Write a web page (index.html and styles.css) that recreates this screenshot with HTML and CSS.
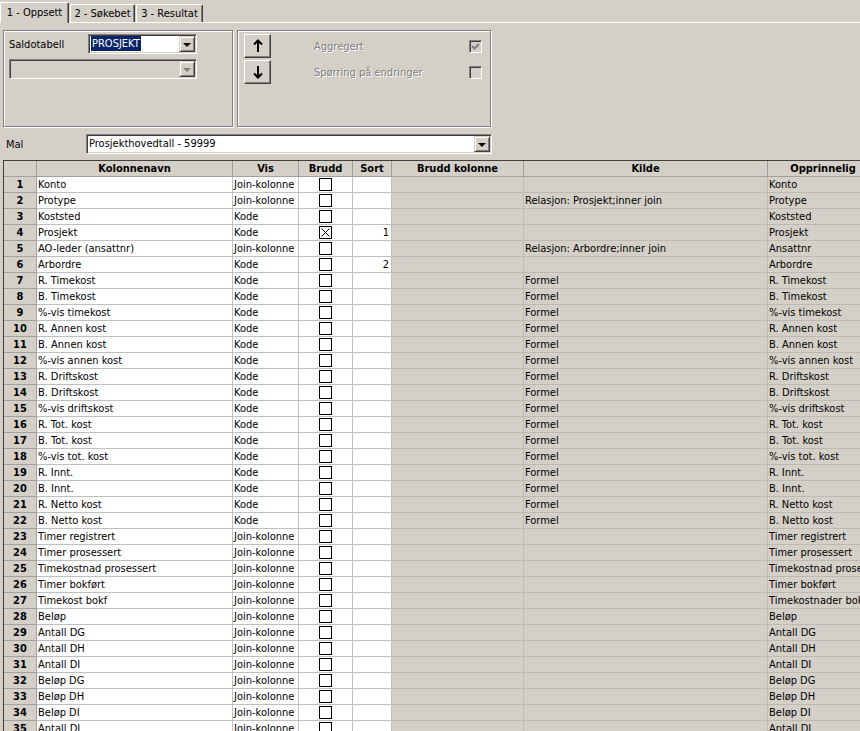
FILE: index.html
```html
<!DOCTYPE html>
<html lang="no">
<head>
<meta charset="utf-8">
<title>Oppsett</title>
<link rel="stylesheet" href="styles.css">
</head>
<body>
<div class="tabs">
  <div class="tab active t1">1 - Oppsett</div>
  <div class="tab t2">2 - Søkebet</div>
  <div class="tab t3">3 - Resultat</div>
</div>

<div class="top">
  <div class="panel p1">
    <div class="prow">
      <span class="lbl lbl-sal">Saldotabell</span>
      <div class="combo c-sal">
        <span class="ctext"><span class="sel">PROSJEKT</span></span>
        <span class="dbtn"><span class="tri"></span></span>
      </div>
    </div>
    <div class="combo c-dis disabled">
      <span class="ctext"></span>
      <span class="dbtn"><span class="tri"></span></span>
    </div>
  </div>
  <div class="panel p2">
    <div class="arrows">
      <div class="abtn">
        <svg width="10" height="14" viewBox="0 0 10 14"><path d="M5 13V1.5M1 5.5L5 1.5L9 5.5" fill="none" stroke="#000" stroke-width="2"/></svg>
      </div>
      <div class="abtn">
        <svg width="10" height="14" viewBox="0 0 10 14"><path d="M5 1V12.5M1 8.5L5 12.5L9 8.5" fill="none" stroke="#000" stroke-width="2"/></svg>
      </div>
    </div>
    <div class="opts">
      <div class="opt">
        <span class="dlbl">Aggregert</span>
        <span class="ck">
          <svg width="9" height="9" viewBox="0 0 9 9"><path d="M1 4L3.5 6.5L8 2" fill="none" stroke="#808080" stroke-width="2"/></svg>
        </span>
      </div>
      <div class="opt">
        <span class="dlbl">Spørring på endringer</span>
        <span class="ck"></span>
      </div>
    </div>
  </div>
</div>

<div class="malrow">
  <span class="lbl lbl-mal">Mal</span>
  <div class="combo c-mal">
    <span class="ctext">Prosjekthovedtall - 59999</span>
    <span class="dbtn"><span class="tri"></span></span>
  </div>
</div>

<div class="grid">
<table>
<thead>
<tr>
  <th class="w0"></th>
  <th class="w1">Kolonnenavn</th>
  <th class="w2">Vis</th>
  <th class="w3">Brudd</th>
  <th class="w4">Sort</th>
  <th class="w5">Brudd kolonne</th>
  <th class="w6">Kilde</th>
  <th class="w7">Opprinnelig</th>
</tr>
</thead>
<tbody>
<tr><th class="rh">1</th><td>Konto</td><td>Join-kolonne</td><td class="chk"><span class="cb"></span></td><td class="num"></td><td class="g"></td><td class="g"></td><td class="g">Konto</td></tr>
<tr><th class="rh">2</th><td>Protype</td><td>Join-kolonne</td><td class="chk"><span class="cb"></span></td><td class="num"></td><td class="g"></td><td class="g">Relasjon: Prosjekt;inner join</td><td class="g">Protype</td></tr>
<tr><th class="rh">3</th><td>Koststed</td><td>Kode</td><td class="chk"><span class="cb"></span></td><td class="num"></td><td class="g"></td><td class="g"></td><td class="g">Koststed</td></tr>
<tr><th class="rh">4</th><td>Prosjekt</td><td>Kode</td><td class="chk"><span class="cb"><svg width="11" height="11" viewBox="0 0 11 11"><path d="M1.5 1.5L9.5 9.5M9.5 1.5L1.5 9.5" stroke="#000" stroke-width="1"/></svg></span></td><td class="num">1</td><td class="g"></td><td class="g"></td><td class="g">Prosjekt</td></tr>
<tr><th class="rh">5</th><td>AO-leder (ansattnr)</td><td>Join-kolonne</td><td class="chk"><span class="cb"></span></td><td class="num"></td><td class="g"></td><td class="g">Relasjon: Arbordre;inner join</td><td class="g">Ansattnr</td></tr>
<tr><th class="rh">6</th><td>Arbordre</td><td>Kode</td><td class="chk"><span class="cb"></span></td><td class="num">2</td><td class="g"></td><td class="g"></td><td class="g">Arbordre</td></tr>
<tr><th class="rh">7</th><td>R. Timekost</td><td>Kode</td><td class="chk"><span class="cb"></span></td><td class="num"></td><td class="g"></td><td class="g">Formel</td><td class="g">R. Timekost</td></tr>
<tr><th class="rh">8</th><td>B. Timekost</td><td>Kode</td><td class="chk"><span class="cb"></span></td><td class="num"></td><td class="g"></td><td class="g">Formel</td><td class="g">B. Timekost</td></tr>
<tr><th class="rh">9</th><td>%-vis timekost</td><td>Kode</td><td class="chk"><span class="cb"></span></td><td class="num"></td><td class="g"></td><td class="g">Formel</td><td class="g">%-vis timekost</td></tr>
<tr><th class="rh">10</th><td>R. Annen kost</td><td>Kode</td><td class="chk"><span class="cb"></span></td><td class="num"></td><td class="g"></td><td class="g">Formel</td><td class="g">R. Annen kost</td></tr>
<tr><th class="rh">11</th><td>B. Annen kost</td><td>Kode</td><td class="chk"><span class="cb"></span></td><td class="num"></td><td class="g"></td><td class="g">Formel</td><td class="g">B. Annen kost</td></tr>
<tr><th class="rh">12</th><td>%-vis annen kost</td><td>Kode</td><td class="chk"><span class="cb"></span></td><td class="num"></td><td class="g"></td><td class="g">Formel</td><td class="g">%-vis annen kost</td></tr>
<tr><th class="rh">13</th><td>R. Driftskost</td><td>Kode</td><td class="chk"><span class="cb"></span></td><td class="num"></td><td class="g"></td><td class="g">Formel</td><td class="g">R. Driftskost</td></tr>
<tr><th class="rh">14</th><td>B. Driftskost</td><td>Kode</td><td class="chk"><span class="cb"></span></td><td class="num"></td><td class="g"></td><td class="g">Formel</td><td class="g">B. Driftskost</td></tr>
<tr><th class="rh">15</th><td>%-vis driftskost</td><td>Kode</td><td class="chk"><span class="cb"></span></td><td class="num"></td><td class="g"></td><td class="g">Formel</td><td class="g">%-vis driftskost</td></tr>
<tr><th class="rh">16</th><td>R. Tot. kost</td><td>Kode</td><td class="chk"><span class="cb"></span></td><td class="num"></td><td class="g"></td><td class="g">Formel</td><td class="g">R. Tot. kost</td></tr>
<tr><th class="rh">17</th><td>B. Tot. kost</td><td>Kode</td><td class="chk"><span class="cb"></span></td><td class="num"></td><td class="g"></td><td class="g">Formel</td><td class="g">B. Tot. kost</td></tr>
<tr><th class="rh">18</th><td>%-vis tot. kost</td><td>Kode</td><td class="chk"><span class="cb"></span></td><td class="num"></td><td class="g"></td><td class="g">Formel</td><td class="g">%-vis tot. kost</td></tr>
<tr><th class="rh">19</th><td>R. Innt.</td><td>Kode</td><td class="chk"><span class="cb"></span></td><td class="num"></td><td class="g"></td><td class="g">Formel</td><td class="g">R. Innt.</td></tr>
<tr><th class="rh">20</th><td>B. Innt.</td><td>Kode</td><td class="chk"><span class="cb"></span></td><td class="num"></td><td class="g"></td><td class="g">Formel</td><td class="g">B. Innt.</td></tr>
<tr><th class="rh">21</th><td>R. Netto kost</td><td>Kode</td><td class="chk"><span class="cb"></span></td><td class="num"></td><td class="g"></td><td class="g">Formel</td><td class="g">R. Netto kost</td></tr>
<tr><th class="rh">22</th><td>B. Netto kost</td><td>Kode</td><td class="chk"><span class="cb"></span></td><td class="num"></td><td class="g"></td><td class="g">Formel</td><td class="g">B. Netto kost</td></tr>
<tr><th class="rh">23</th><td>Timer registrert</td><td>Join-kolonne</td><td class="chk"><span class="cb"></span></td><td class="num"></td><td class="g"></td><td class="g"></td><td class="g">Timer registrert</td></tr>
<tr><th class="rh">24</th><td>Timer prosessert</td><td>Join-kolonne</td><td class="chk"><span class="cb"></span></td><td class="num"></td><td class="g"></td><td class="g"></td><td class="g">Timer prosessert</td></tr>
<tr><th class="rh">25</th><td>Timekostnad prosessert</td><td>Join-kolonne</td><td class="chk"><span class="cb"></span></td><td class="num"></td><td class="g"></td><td class="g"></td><td class="g">Timekostnad prosessert</td></tr>
<tr><th class="rh">26</th><td>Timer bokført</td><td>Join-kolonne</td><td class="chk"><span class="cb"></span></td><td class="num"></td><td class="g"></td><td class="g"></td><td class="g">Timer bokført</td></tr>
<tr><th class="rh">27</th><td>Timekost bokf</td><td>Join-kolonne</td><td class="chk"><span class="cb"></span></td><td class="num"></td><td class="g"></td><td class="g"></td><td class="g">Timekostnader bokført</td></tr>
<tr><th class="rh">28</th><td>Beløp</td><td>Join-kolonne</td><td class="chk"><span class="cb"></span></td><td class="num"></td><td class="g"></td><td class="g"></td><td class="g">Beløp</td></tr>
<tr><th class="rh">29</th><td>Antall DG</td><td>Join-kolonne</td><td class="chk"><span class="cb"></span></td><td class="num"></td><td class="g"></td><td class="g"></td><td class="g">Antall DG</td></tr>
<tr><th class="rh">30</th><td>Antall DH</td><td>Join-kolonne</td><td class="chk"><span class="cb"></span></td><td class="num"></td><td class="g"></td><td class="g"></td><td class="g">Antall DH</td></tr>
<tr><th class="rh">31</th><td>Antall DI</td><td>Join-kolonne</td><td class="chk"><span class="cb"></span></td><td class="num"></td><td class="g"></td><td class="g"></td><td class="g">Antall DI</td></tr>
<tr><th class="rh">32</th><td>Beløp DG</td><td>Join-kolonne</td><td class="chk"><span class="cb"></span></td><td class="num"></td><td class="g"></td><td class="g"></td><td class="g">Beløp DG</td></tr>
<tr><th class="rh">33</th><td>Beløp DH</td><td>Join-kolonne</td><td class="chk"><span class="cb"></span></td><td class="num"></td><td class="g"></td><td class="g"></td><td class="g">Beløp DH</td></tr>
<tr><th class="rh">34</th><td>Beløp DI</td><td>Join-kolonne</td><td class="chk"><span class="cb"></span></td><td class="num"></td><td class="g"></td><td class="g"></td><td class="g">Beløp DI</td></tr>
<tr><th class="rh">35</th><td>Antall DJ</td><td>Join-kolonne</td><td class="chk"><span class="cb"></span></td><td class="num"></td><td class="g"></td><td class="g"></td><td class="g">Antall DJ</td></tr>
</tbody>
</table>
</div>
</body>
</html>
```

FILE: styles.css
```css
html, body {
  margin: 0;
  padding: 0;
  width: 860px;
  height: 731px;
  overflow: hidden;
  background: #d4d0c8;
}
body {
  font-family: "DejaVu Sans Condensed", "Liberation Sans", sans-serif;
  font-size: 11px;
  color: #000;
}

/* Tabs */
.tabs {
  display: flex;
  align-items: flex-end;
  height: 22px;
  border-bottom: 1px solid #fff;
}
.tab {
  box-sizing: border-box;
  height: 18px;
  line-height: 18px;
  text-align: center;
  border-top: 1px solid #fff;
  border-left: 1px solid #fff;
  border-right: 1px solid #404040;
  box-shadow: inset -1px 0 0 #808080;
  border-radius: 2px 2px 0 0;
  background: #d4d0c8;
  margin-left: 1px;
}
.tab.active {
  height: 21px;
  line-height: 19px;
  margin-bottom: -1px;
  position: relative;
  z-index: 1;
  margin-left: 0;
}
.t1 { width: 69px; }
.t2 { width: 65px; }
.t3 { width: 67px; margin-left: 1px; }

/* Top panels */
.top {
  display: flex;
  gap: 4px;
  margin: 7px 0 0 3px;
}
.panel {
  box-sizing: border-box;
  height: 97px;
  border: 1px solid #808080;
  box-shadow: inset 1px 1px 0 #fff, 1px 1px 0 #fff;
}
.p1 {
  width: 230px;
  padding: 3px 0 0 5px;
}
.p2 {
  width: 254px;
  padding: 3px 0 0 6px;
  display: flex;
}
.prow {
  display: flex;
  align-items: center;
}
.lbl-sal { width: 79px; }

/* Combos */
.combo {
  box-sizing: border-box;
  height: 20px;
  display: flex;
  background: #fff;
  border: 1px solid;
  border-color: #808080 #fff #fff #808080;
  box-shadow: inset 1px 1px 0 #404040, inset -1px -1px 0 #d4d0c8;
  padding: 1px;
}
.combo.disabled { background: #d4d0c8; }
.c-sal { width: 109px; }
.c-dis { width: 188px; margin-top: 5px; }
.c-mal { width: 406px; }
.ctext {
  flex: 1;
  line-height: 16px;
  padding-left: 1px;
  white-space: nowrap;
  overflow: hidden;
}
.sel {
  background: #0a246a;
  color: #fff;
  padding: 1px 1px;
}
.dbtn {
  box-sizing: border-box;
  width: 16px;
  height: 16px;
  background: #d4d0c8;
  border: 1px solid;
  border-color: #d4d0c8 #404040 #404040 #d4d0c8;
  box-shadow: inset 1px 1px 0 #fff, inset -1px -1px 0 #808080;
  display: flex;
  align-items: center;
  justify-content: center;
}
.tri {
  width: 0;
  height: 0;
  border-left: 4px solid transparent;
  border-right: 4px solid transparent;
  border-top: 4px solid #000;
  margin-top: 1px;
}
.disabled .tri { border-top-color: #808080; }

/* Arrow buttons */
.arrows {
  display: flex;
  flex-direction: column;
  gap: 2px;
}
.abtn {
  box-sizing: border-box;
  width: 27px;
  height: 24px;
  border: 1px solid;
  border-color: #fff #404040 #404040 #fff;
  box-shadow: inset -1px -1px 0 #808080;
  display: flex;
  align-items: center;
  justify-content: center;
}
.opts {
  margin: 6px 0 0 43px;
  width: 168px;
  display: flex;
  flex-direction: column;
  gap: 13px;
}
.opt {
  height: 13px;
  display: flex;
  align-items: center;
  justify-content: space-between;
}
.dlbl {
  color: #808080;
  text-shadow: 1px 1px 0 #fff;
}
.ck {
  box-sizing: border-box;
  width: 13px;
  height: 13px;
  border: 1px solid;
  border-color: #808080 #fff #fff #808080;
  box-shadow: inset 1px 1px 0 #404040, inset -1px -1px 0 #d4d0c8;
  background: #d4d0c8;
  display: flex;
  align-items: center;
  justify-content: center;
}

/* Mal row */
.malrow {
  display: flex;
  align-items: center;
  margin-top: 7px;
}
.lbl-mal { width: 80px; padding-left: 6px; }

/* Grid */
.grid {
  margin: 6px 0 0 3px;
  width: 857px;
  overflow: hidden;
  border-top: 1px solid #404040;
  border-left: 1px solid #404040;
}
table {
  table-layout: fixed;
  border-collapse: separate;
  border-spacing: 0;
  width: 875px;
}
th, td {
  box-sizing: border-box;
  height: 16px;
  padding: 0 1px;
  line-height: 15px;
  white-space: nowrap;
  overflow: hidden;
  border-right: 1px solid #c0c0c0;
  border-bottom: 1px solid #c0c0c0;
  text-align: left;
  font-weight: normal;
  background: #fff;
}
thead th {
  background: #d4d0c8;
  font-weight: bold;
  text-align: center;
  border-color: #a0a0a0;
}
th.rh {
  background: #d4d0c8;
  font-weight: bold;
  text-align: center;
  border-color: #a0a0a0;
}
.w0 { width: 33px; }
.w1 { width: 196px; }
.w2 { width: 66px; }
.w3 { width: 54px; }
.w4 { width: 39px; }
.w5 { width: 132px; }
.w6 { width: 244px; }
.w7 { width: 111px; }
td.g {
  background: #d4d0c8;
  border-bottom-color: #bcbab4;
  border-right-color: #bcbab4;
}
td.num { text-align: right; padding-right: 2px; }
td.chk { vertical-align: top; padding: 0; }
.cb {
  box-sizing: border-box;
  display: block;
  width: 13px;
  height: 13px;
  margin: 1px auto 0;
  border: 1px solid #000;
  background: #fff;
}
.cb svg { display: block; }
```
